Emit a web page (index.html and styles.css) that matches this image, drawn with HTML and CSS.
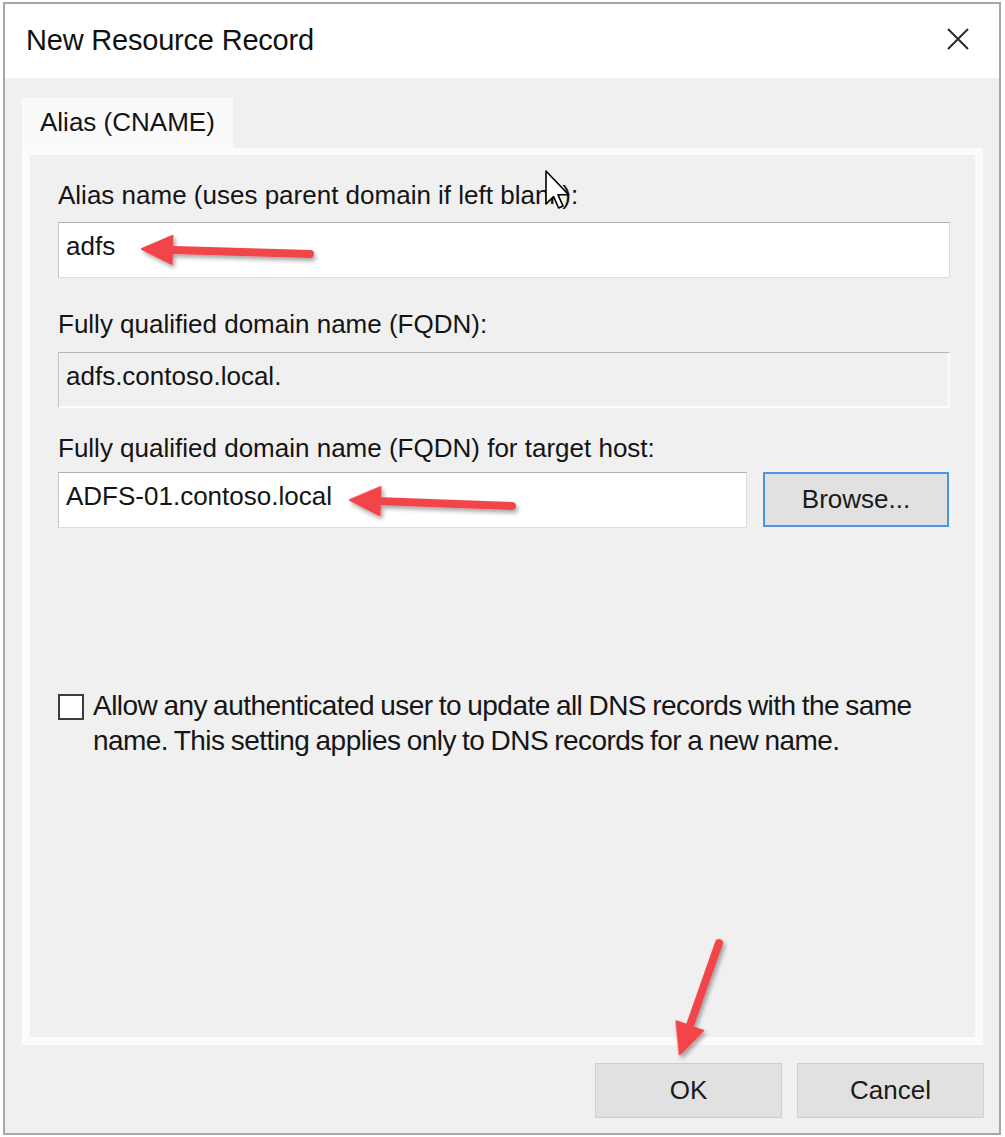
FILE: index.html
```html
<!DOCTYPE html>
<html>
<head>
<meta charset="utf-8">
<title>New Resource Record</title>
<link rel="stylesheet" href="styles.css">
</head>
<body>
<div class="dialog">
  <div class="titlebar">
    <span class="title">New Resource Record</span>
    <svg class="close" width="22" height="22" viewBox="0 0 22 22"><path d="M1 1 L21 21 M21 1 L1 21" stroke="#2b2b2b" stroke-width="2" fill="none"/></svg>
  </div>
  <div class="body">
    <div class="tabs"><div class="tab">Alias (CNAME)</div></div>
    <div class="panel">
      <div class="label l1">Alias name (uses parent domain if left blank):</div>
      <div class="field f1">adfs</div>
      <div class="label l2">Fully qualified domain name (FQDN):</div>
      <div class="field readonly f2">adfs.contoso.local.</div>
      <div class="label l3">Fully qualified domain name (FQDN) for target host:</div>
      <div class="row">
        <div class="field f3">ADFS-01.contoso.local</div>
        <div class="btn browse">Browse...</div>
      </div>
      <div class="check">
        <span class="box"></span>
        <span class="check-text">Allow any authenticated user to update all DNS records with the same name. This setting applies only to DNS records for a new name.</span>
      </div>
    </div>
    <div class="buttons">
      <div class="btn">OK</div>
      <div class="btn">Cancel</div>
    </div>
  </div>
</div>
<svg class="overlay" width="1005" height="1137" viewBox="0 0 1005 1137">
  <defs>
    <filter id="sh" x="-20%" y="-20%" width="140%" height="140%">
      <feDropShadow dx="2" dy="3" stdDeviation="2" flood-color="#000" flood-opacity="0.35"/>
    </filter>
  </defs>
  <g fill="#f2444a" stroke="#f2444a" filter="url(#sh)">
    <g transform="translate(310 254) rotate(181.7)">
      <line x1="0" y1="0" x2="145" y2="0" stroke-width="8" stroke-linecap="round"/>
      <path d="M168 0 L138 -14 L138 14 Z" stroke-width="2" stroke-linejoin="round"/>
    </g>
    <g transform="translate(512 506) rotate(182.1)">
      <line x1="0" y1="0" x2="140" y2="0" stroke-width="8" stroke-linecap="round"/>
      <path d="M162 0 L132 -14 L132 14 Z" stroke-width="2" stroke-linejoin="round"/>
    </g>
    <g transform="translate(719 943) rotate(109.4)">
      <line x1="0" y1="0" x2="96" y2="0" stroke-width="8" stroke-linecap="round"/>
      <path d="M118 0 L88 -14 L88 14 Z" stroke-width="2" stroke-linejoin="round"/>
    </g>
  </g>
  <path transform="translate(546 171) scale(2)" d="M0 0 V16.5 L3.8 12.8 L6.3 18.5 L8.5 17.5 L6 11.9 H11.3 Z" fill="#fff" stroke="#000" stroke-width="0.8" stroke-linejoin="round"/>
</svg>
</body>
</html>
```

FILE: styles.css
```css
html, body {
  margin: 0;
  padding: 0;
}
body {
  position: relative;
  width: 1005px;
  height: 1137px;
  overflow: hidden;
  background: #ffffff;
  font-family: "Liberation Sans", Arial, sans-serif;
  color: #141414;
}
.dialog {
  box-sizing: border-box;
  margin: 2px 0 0 3px;
  width: 998px;
  height: 1133px;
  border: 2px solid #a7a7a7;
  display: flex;
  flex-direction: column;
  background: #f0f0f0;
}
.titlebar {
  height: 74px;
  flex: none;
  background: #ffffff;
  display: flex;
  align-items: center;
  justify-content: space-between;
  padding: 0 30px 0 21px;
}
.title {
  font-size: 29px;
  letter-spacing: -0.2px;
  color: #111;
  margin-top: -1px;
}
.close {
  margin-top: -4px;
}
.body {
  flex: 1;
  padding: 20px 15px 15px 17px;
  display: flex;
  flex-direction: column;
}
.tabs {
  display: flex;
  height: 50px;
}
.tab {
  width: 211px;
  box-sizing: border-box;
  background: #fafafa;
  font-size: 26px;
  line-height: 48px;
  padding-left: 18px;
}
.panel {
  box-sizing: border-box;
  width: 961px;
  height: 897px;
  border: 8px solid #fbfbfb;
  border-top-width: 7px;
  background: #f0f0f0;
  padding: 25px 25px 0 28px;
}
.label {
  font-size: 26px;
  line-height: 30px;
  white-space: nowrap;
}
.l2 { margin-top: 31px; }
.l3 { margin-top: 25px; }
.field {
  box-sizing: border-box;
  height: 56px;
  background: #ffffff;
  border: 1px solid #dcdcdc;
  border-top-color: #b0b0b0;
  border-left-color: #c4c4c4;
  font-size: 26px;
  line-height: 46px;
  padding: 0 0 8px 7px;
}
.f1 { margin-top: 12px; }
.f2 {
  margin-top: 13px;
  background: #f0f0f0;
  border-color: #b4b4b4 #ffffff #ffffff #c4c4c4;
  box-shadow: inset -2px -2px 0 #f6f6f6;
}
.row {
  display: flex;
  gap: 16px;
  margin-top: 9px;
}
.f3 {
  width: 689px;
}
.btn {
  box-sizing: border-box;
  width: 187px;
  height: 55px;
  background: #e1e1e1;
  border: 1px solid #cfcfcf;
  font-size: 26px;
  display: flex;
  align-items: center;
  justify-content: center;
  color: #1a1a1a;
}
.browse {
  width: 186px;
  border: 2px solid #4a94e0;
}
.check {
  display: flex;
  gap: 9px;
  margin-top: 160px;
}
.box {
  flex: none;
  box-sizing: border-box;
  width: 26px;
  height: 26px;
  margin-top: 6px;
  background: #ffffff;
  border: 2px solid #3d3d3d;
}
.check-text {
  font-size: 28px;
  letter-spacing: -0.55px;
  word-spacing: -1px;
  line-height: 35px;
  width: 840px;
  color: #161616;
}
.buttons {
  display: flex;
  justify-content: flex-end;
  gap: 15px;
  margin-top: 18px;
}
.overlay {
  position: absolute;
  left: 0;
  top: 0;
  pointer-events: none;
}
```
